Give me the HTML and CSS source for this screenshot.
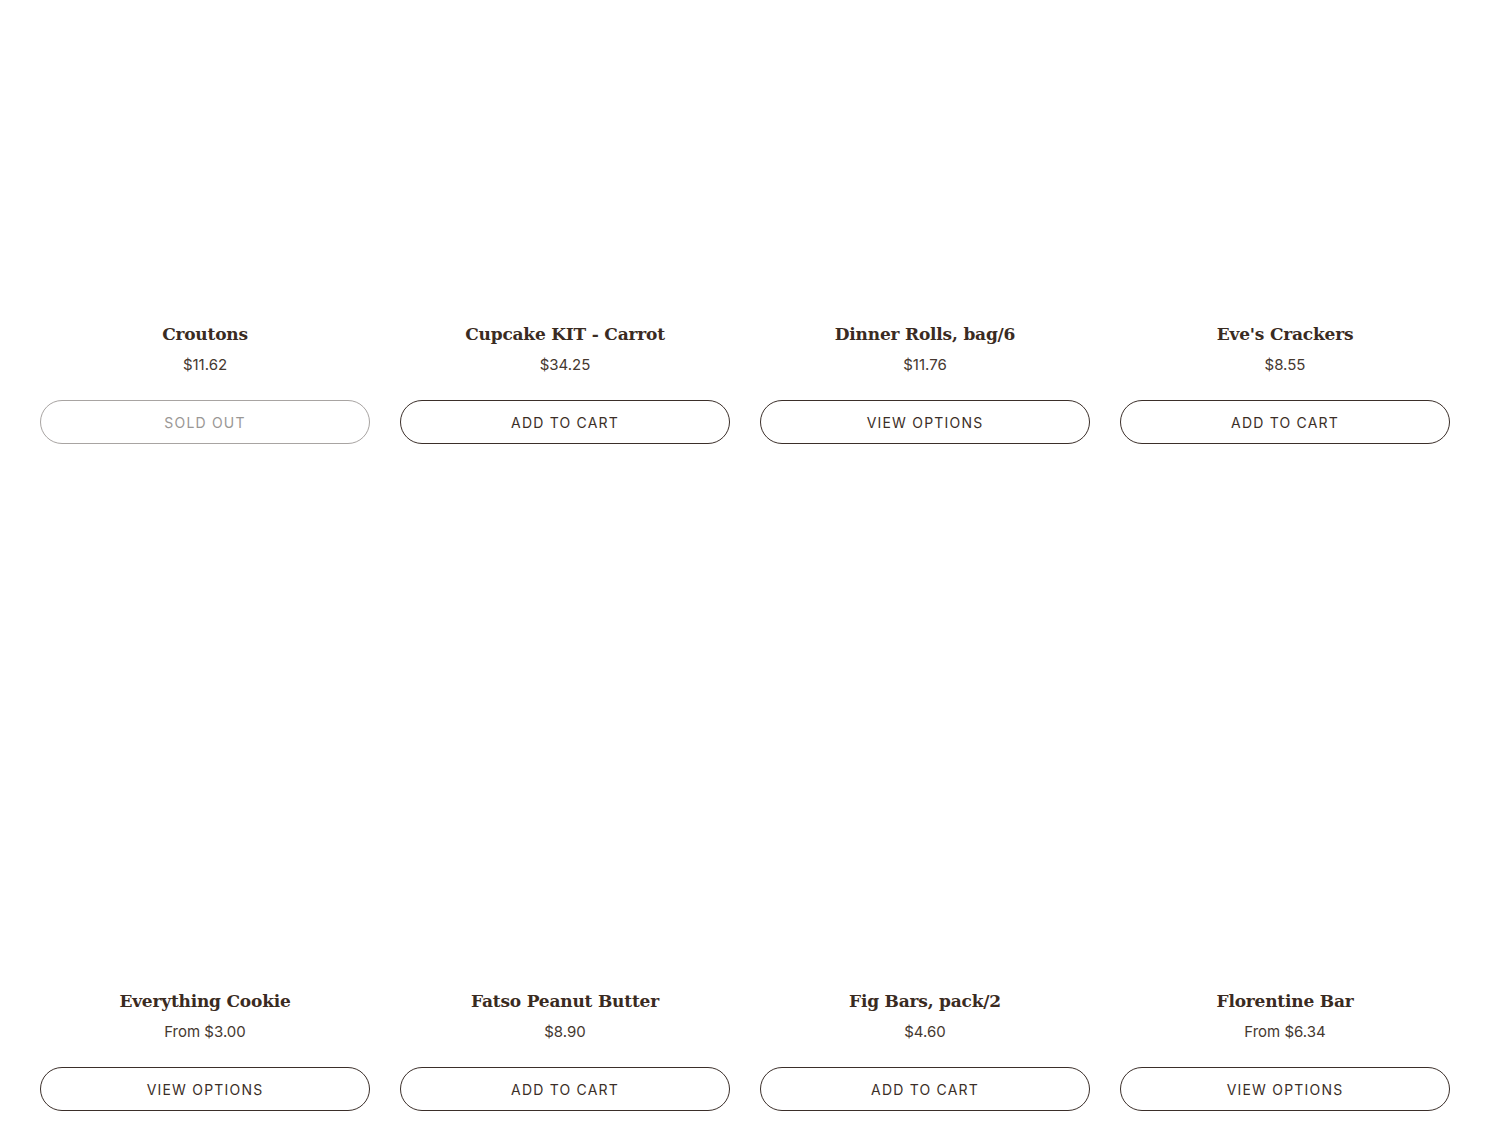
FILE: index.html
```html
<!DOCTYPE html>
<html lang="en">
<head>
<meta charset="utf-8">
<title>Products</title>
<link rel="stylesheet" href="styles.css">
</head>
<body>
<main class="collection">
  <ul class="grid">
    <li class="card">
      <div class="media"></div>
      <div class="info">
        <h3 class="title">Croutons</h3>
        <div class="price">$11.62</div>
        <button class="btn btn-disabled" disabled>Sold out</button>
      </div>
    </li>
    <li class="card">
      <div class="media"></div>
      <div class="info">
        <h3 class="title">Cupcake KIT - Carrot</h3>
        <div class="price">$34.25</div>
        <button class="btn">Add to cart</button>
      </div>
    </li>
    <li class="card">
      <div class="media"></div>
      <div class="info">
        <h3 class="title">Dinner Rolls, bag/6</h3>
        <div class="price">$11.76</div>
        <button class="btn">View options</button>
      </div>
    </li>
    <li class="card">
      <div class="media"></div>
      <div class="info">
        <h3 class="title">Eve's Crackers</h3>
        <div class="price">$8.55</div>
        <button class="btn">Add to cart</button>
      </div>
    </li>
    <li class="card">
      <div class="media"></div>
      <div class="info">
        <h3 class="title">Everything Cookie</h3>
        <div class="price">From $3.00</div>
        <button class="btn">View options</button>
      </div>
    </li>
    <li class="card">
      <div class="media"></div>
      <div class="info">
        <h3 class="title">Fatso Peanut Butter</h3>
        <div class="price">$8.90</div>
        <button class="btn">Add to cart</button>
      </div>
    </li>
    <li class="card">
      <div class="media"></div>
      <div class="info">
        <h3 class="title">Fig Bars, pack/2</h3>
        <div class="price">$4.60</div>
        <button class="btn">Add to cart</button>
      </div>
    </li>
    <li class="card">
      <div class="media"></div>
      <div class="info">
        <h3 class="title">Florentine Bar</h3>
        <div class="price">From $6.34</div>
        <button class="btn">View options</button>
      </div>
    </li>
  </ul>
</main>
</body>
</html>
```
FILE: styles.css
```css
html, body {
  margin: 0;
  padding: 0;
  background: #ffffff;
}
body {
  font-family: "Inter", "Liberation Sans", sans-serif;
  color: #3b2e27;
  overflow: hidden;
}
.collection {
  padding: 0 40px;
}
.grid {
  list-style: none;
  margin: 0;
  padding: 0;
  display: grid;
  grid-template-columns: repeat(4, 1fr);
  column-gap: 30px;
  row-gap: 223px;
}
.card {
  display: flex;
  flex-direction: column;
}
.media {
  height: 308px;
  background: #ffffff;
}
.info {
  display: flex;
  flex-direction: column;
  align-items: center;
  text-align: center;
}
.title {
  margin: 12px 0 0;
  font-family: "DejaVu Serif", "Liberation Serif", serif;
  font-weight: 700;
  font-size: 17px;
  line-height: 28px;
  color: #3a2b22;
  letter-spacing: -0.2px;
}
.price {
  margin-top: 5px;
  font-size: 15px;
  line-height: 24px;
  font-weight: 400;
  color: #45382f;
}
.btn {
  margin-top: 23px;
  width: 100%;
  height: 44px;
  border: 1px solid #3b2f2a;
  border-radius: 22px;
  background: #ffffff;
  font-family: "Inter", "Liberation Sans", sans-serif;
  font-size: 14px;
  font-weight: 400;
  letter-spacing: 1.2px;
  text-transform: uppercase;
  color: #3b2e27;
  padding: 0;
}
.btn-disabled {
  border-color: #a8a4a2;
  color: #9a9795;
}
```
